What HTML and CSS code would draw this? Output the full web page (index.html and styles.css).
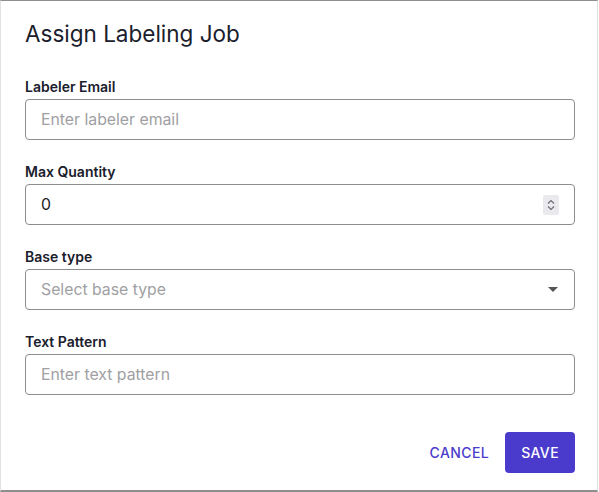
FILE: index.html
```html
<!DOCTYPE html>
<html lang="en">
<head>
<meta charset="utf-8">
<title>Assign Labeling Job</title>
<link rel="stylesheet" href="styles.css">
</head>
<body>
<div class="dialog">
  <h2 class="title">Assign Labeling Job</h2>
  <div class="fields">
    <div class="field">
      <div class="label">Labeler Email</div>
      <div class="input"><span class="placeholder">Enter labeler email</span></div>
    </div>
    <div class="field">
      <div class="label">Max Quantity</div>
      <div class="input">
        <span class="value">0</span>
        <span class="spinner">
          <svg width="16" height="20" viewBox="0 0 16 20"><path d="M5 8.5 L8 5.5 L11 8.5" fill="none" stroke="#6b6b75" stroke-width="1.1"/><path d="M5 11.5 L8 14.5 L11 11.5" fill="none" stroke="#6b6b75" stroke-width="1.1"/></svg>
        </span>
      </div>
    </div>
    <div class="field">
      <div class="label">Base type</div>
      <div class="input"><span class="placeholder">Select base type</span><span class="caret"></span></div>
    </div>
    <div class="field">
      <div class="label">Text Pattern</div>
      <div class="input"><span class="placeholder">Enter text pattern</span></div>
    </div>
  </div>
  <div class="actions">
    <button class="btn btn-text">Cancel</button>
    <button class="btn btn-primary">Save</button>
  </div>
</div>
</body>
</html>
```
FILE: styles.css
```css
html, body {
  margin: 0;
  padding: 0;
  background: #ffffff;
}
body {
  font-family: Inter, "Noto Sans", "Liberation Sans", sans-serif;
  color: #1a202c;
}
.dialog {
  box-sizing: border-box;
  width: 598px;
  height: 492px;
  border-top: 1px solid #8e8e8e;
  border-bottom: 2px solid #8e8e8e;
  border-left: 1px solid #e2e2e2;
  border-right: 1px solid #e2e2e2;
  padding: 19px 22px 0 24px;
}
.title {
  margin: 0;
  font-size: 22.5px;
  line-height: 28px;
  font-weight: 400;
  color: #1a202c;
}
.fields {
  margin-top: 30px;
  display: flex;
  flex-direction: column;
  gap: 23px;
}
.field {
  display: flex;
  flex-direction: column;
  gap: 3px;
}
.label {
  font-size: 14px;
  line-height: 18px;
  font-weight: 600;
  color: #1a202c;
}
.input {
  box-sizing: border-box;
  height: 41px;
  border: 1px solid #8d8d8d;
  border-radius: 4px;
  display: flex;
  align-items: center;
  padding: 0 15px 0 15px;
  font-size: 15.8px;
}
.placeholder {
  color: #a0a0a3;
  flex: 1;
}
.value {
  color: #1a1a1a;
  flex: 1;
}
.spinner {
  width: 16px;
  height: 20px;
  background: #e9e9ee;
  border-radius: 2px;
  display: flex;
}
.caret {
  width: 0;
  height: 0;
  border-left: 5px solid transparent;
  border-right: 5px solid transparent;
  border-top: 5px solid #555555;
  margin-right: 1px;
}
.actions {
  margin-top: 37px;
  display: flex;
  justify-content: flex-end;
}
.btn {
  font-family: Inter, "Noto Sans", "Liberation Sans", sans-serif;
  font-size: 14px;
  font-weight: 500;
  letter-spacing: 0.4px;
  text-transform: uppercase;
  height: 41px;
  padding: 0 16px;
  border: none;
  border-radius: 4px;
  cursor: pointer;
}
.btn-text {
  background: transparent;
  color: #4a3dcc;
}
.btn-primary {
  background: #4a3bcd;
  color: #ffffff;
}
```
